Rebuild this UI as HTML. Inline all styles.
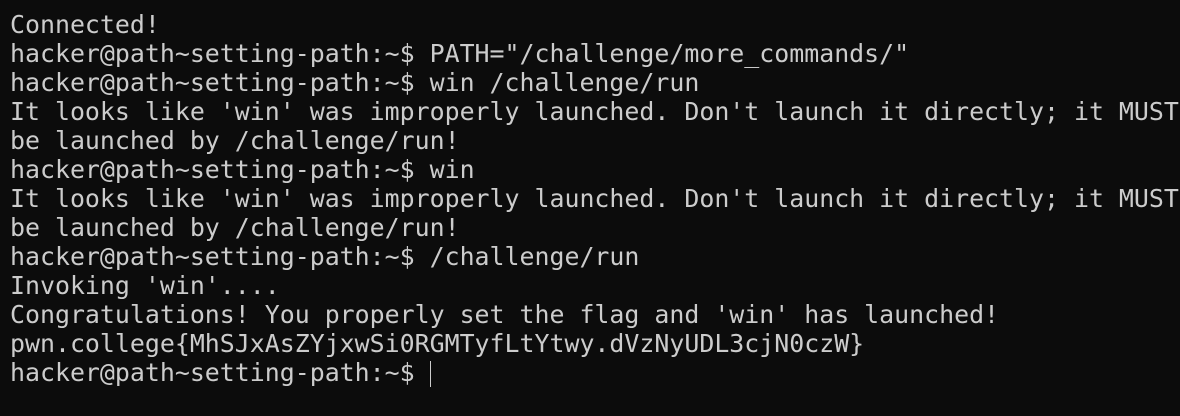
<!DOCTYPE html>
<html><head><style>
html,body{margin:0;padding:0;background:#0c0c0c;width:1180px;height:416px;overflow:hidden}
pre{margin:0;position:absolute;left:10px;top:10px;font-family:"DejaVu Sans Mono","Liberation Mono",monospace;font-size:24.9px;line-height:29px;color:#cccccc;white-space:pre}
.c{display:inline-block;width:1px;height:26px;background:#cccccc;vertical-align:-6px}
</style></head><body><pre>Connected!
hacker@path~setting-path:~$ PATH="/challenge/more_commands/"
hacker@path~setting-path:~$ win /challenge/run
It looks like 'win' was improperly launched. Don't launch it directly; it MUST
be launched by /challenge/run!
hacker@path~setting-path:~$ win
It looks like 'win' was improperly launched. Don't launch it directly; it MUST
be launched by /challenge/run!
hacker@path~setting-path:~$ /challenge/run
Invoking 'win'....
Congratulations! You properly set the flag and 'win' has launched!
pwn.college{MhSJxAsZYjxwSi0RGMTyfLtYtwy.dVzNyUDL3cjN0czW}
hacker@path~setting-path:~$ <span class="c"></span></pre></body></html>
